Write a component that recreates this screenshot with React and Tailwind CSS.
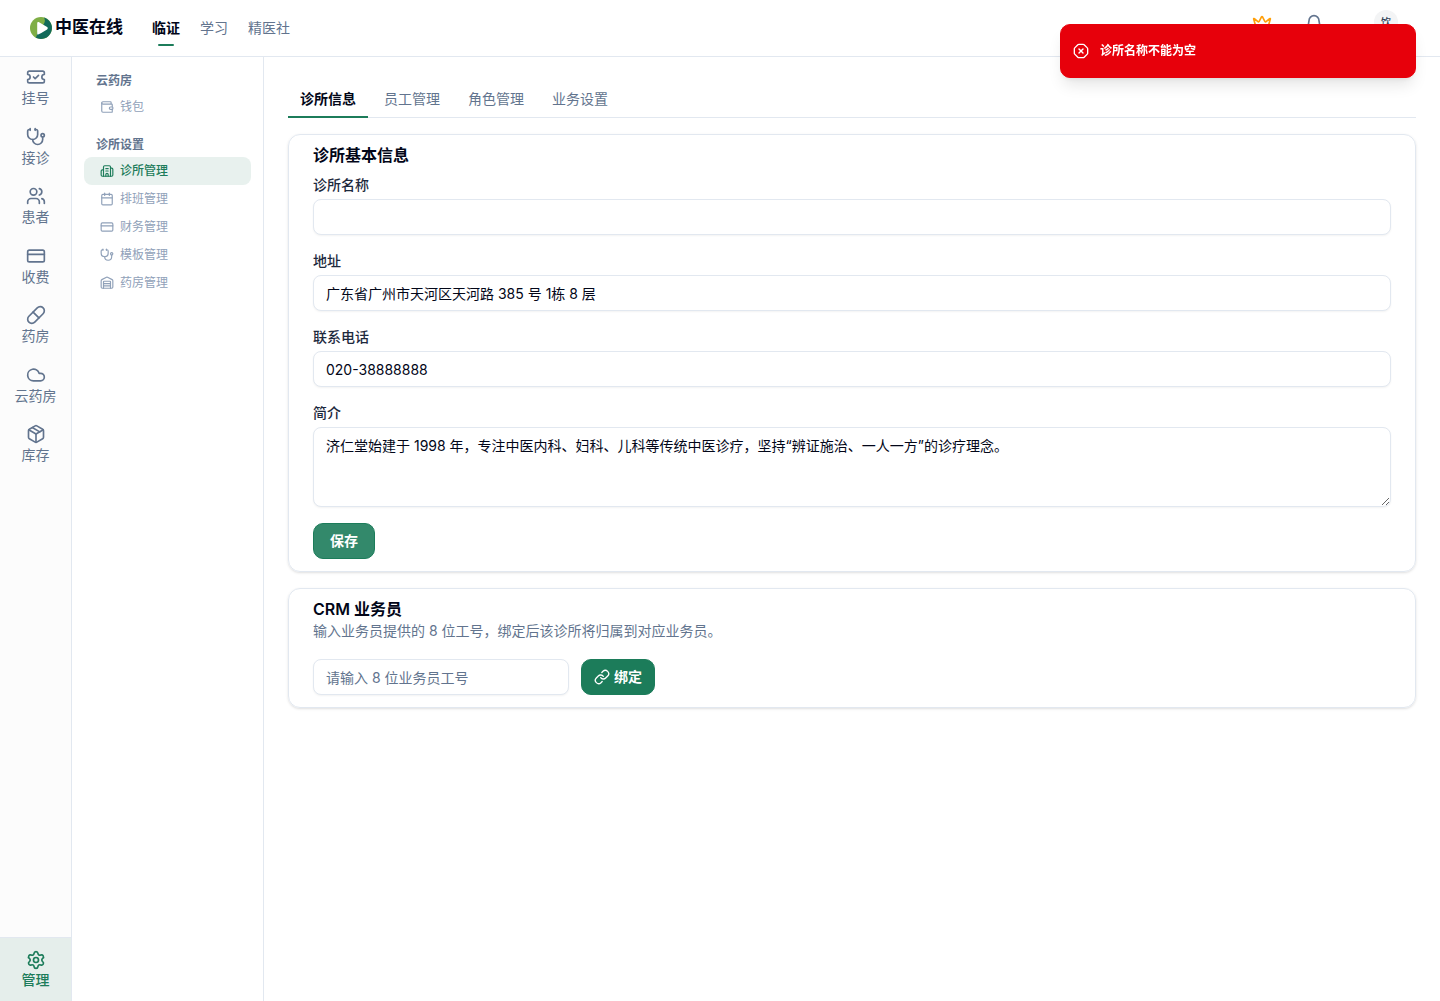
import {
  TicketCheck, Stethoscope, Users, CreditCard, Pill, Cloud, Package, Settings,
  Wallet, Building2, Calendar, Warehouse, Link, OctagonX, Crown, Bell,
} from "lucide-react";

const rail = [
  ["挂号", TicketCheck],
  ["接诊", Stethoscope],
  ["患者", Users],
  ["收费", CreditCard],
  ["药房", Pill],
  ["云药房", Cloud],
  ["库存", Package],
];

const groups = [
  { title: "云药房", items: [["钱包", Wallet]] },
  {
    title: "诊所设置",
    items: [
      ["诊所管理", Building2, true],
      ["排班管理", Calendar],
      ["财务管理", CreditCard],
      ["模板管理", Stethoscope],
      ["药房管理", Warehouse],
    ],
  },
];

const tabs = ["诊所信息", "员工管理", "角色管理", "业务设置"];

const field =
  "w-full rounded-lg border border-slate-200 bg-white px-3 text-sm text-slate-950 shadow-xs outline-none placeholder:text-slate-500";

function Logo() {
  return (
    <svg viewBox="0 0 24 24" className="size-6" aria-hidden="true">
      <circle cx="12" cy="12" r="11" fill="#7fae45" />
      <path d="M15 1.4A11 11 0 1 1 6.6 21.6C8 20 8 18.5 8 17L14 9C16 6.500 16.500 4 15 1.400Z" fill="#126a5a" />
      <path d="M8.200 7.400c0-1.200 1-1.700 1.900-1.200l8 4.900c.9.600.9 1.700 0 2.300l-5.800 3.500c-1.300.8-3 1.400-4.100 1.700Z" fill="#fff" />
    </svg>
  );
}

function Header() {
  return (
    <header className="flex h-14 shrink-0 items-center box-content border-b border-slate-200 pr-[42px] pl-7">
      <a href="#home" className="flex items-center gap-0.5 pl-px text-[17px] font-semibold">
        <Logo />
        中医在线
      </a>
      <nav className="ml-[19px] flex flex-1 text-sm">
        <a href="#clinic" className="relative px-2.5 py-2 font-semibold">
          临证
          <span className="absolute bottom-0 left-1/2 h-0.5 w-4 -translate-x-1/2 rounded-full bg-[#1c7c5a]" />
        </a>
        <a href="#study" className="px-2.5 py-2 text-slate-500">学习</a>
        <a href="#club" className="px-2.5 py-2 text-slate-500">精医社</a>
      </nav>
      <div className="flex items-center pb-2">
        <button type="button" aria-label="会员" className="mr-8 text-[#ff9f0a]"><Crown className="size-5" /></button>
        <button type="button" aria-label="通知" className="mr-[50px] text-slate-500"><Bell className="size-5" /></button>
        <button type="button" className="mb-1 flex size-6 items-center justify-center rounded-full bg-[#f3f4f5] text-[10px] font-medium text-slate-700">饮</button>
      </div>
    </header>
  );
}

function Field({ id, label, value }) {
  return (
    <div className="mb-4">
      <label htmlFor={id} className="mb-1 block text-sm font-medium text-slate-800">{label}</label>
      <input id={id} defaultValue={value} className={`${field} h-9`} />
    </div>
  );
}

export default function App() {
  return (
    <div className="flex min-h-screen flex-col bg-white text-slate-950 font-['Inter','Noto_Sans_CJK_SC',sans-serif]">
      <Header />
      <div className="flex flex-1">
        <nav className="flex w-18 shrink-0 flex-col border-r border-slate-200 bg-[#fcfcfc] text-sm text-slate-500">
          {rail.map(([name, Icon]) => (
            <a key={name} href="#module" className="flex flex-col items-center gap-0.5 py-2.5 leading-tight">
              <Icon className="size-5" />
              {name}
            </a>
          ))}
          <a href="#manage" className="mt-auto flex h-16 flex-col items-center border-t border-slate-200 bg-[#e5eeeb] pt-3 font-medium text-[#1c7c5a]">
            <Settings className="size-5" />
            管理
          </a>
        </nav>
        <aside className="w-48 shrink-0 border-r border-slate-200 px-3 pt-4 text-xs text-slate-400">
          {groups.map((g) => (
            <section key={g.title} className="mb-4">
              <h2 className="px-3 pb-1 font-semibold text-slate-500">{g.title}</h2>
              {g.items.map(([name, Icon, active]) => (
                <a
                  key={name}
                  href="#page"
                  className={active
                    ? "flex h-7 items-center gap-1.5 rounded-lg bg-[#e8f1ee] px-4 font-medium text-[#1c7c5a]"
                    : "flex h-7 items-center gap-1.5 px-4"}
                >
                  <Icon className="size-3.5" />
                  {name}
                </a>
              ))}
            </section>
          ))}
        </aside>
        <main className="min-w-0 flex-1 p-6">
          <div role="tablist" className="flex h-[37px] gap-1 border-b border-slate-200 text-sm">
            {tabs.map((name, i) => (
              <button
                key={name}
                type="button"
                role="tab"
                aria-selected={i === 0}
                className={i === 0
                  ? "-mb-px border-b-2 border-[#1c7c5a] px-3 font-semibold"
                  : "-mb-px border-b-2 border-transparent px-3 text-slate-500"}
              >
                {name}
              </button>
            ))}
          </div>
          <form className="mt-4 rounded-xl border border-slate-200 px-6 py-3 shadow-sm">
            <h2 className="mb-3 text-base leading-4 font-semibold">诊所基本信息</h2>
            <Field id="name" label="诊所名称" value="" />
            <Field id="address" label="地址" value="广东省广州市天河区天河路 385 号 1栋 8 层" />
            <Field id="phone" label="联系电话" value="020-38888888" />
            <label htmlFor="intro" className="mb-1 block text-sm font-medium text-slate-800">简介</label>
            <textarea
              id="intro"
              className={`${field} block h-20 py-2`}
              defaultValue="济仁堂始建于 1998 年，专注中医内科、妇科、儿科等传统中医诊疗，坚持“辨证施治、一人一方”的诊疗理念。"
            />
            <button type="button" className="mt-4 block h-9 rounded-[10px] border border-[#1c7c5a] bg-[#33896b] px-4 text-sm font-semibold text-white">保存</button>
          </form>
          <form className="mt-4 rounded-xl border border-slate-200 px-6 py-3 shadow-sm">
            <h2 className="text-base leading-4 font-semibold">CRM 业务员</h2>
            <p className="mt-1 text-sm text-slate-500">输入业务员提供的 8 位工号，绑定后该诊所将归属到对应业务员。</p>
            <div className="mt-[18px] flex gap-3">
              <div className="w-64">
                <input aria-label="业务员工号" placeholder="请输入 8 位业务员工号" className={`${field} h-9`} />
              </div>
              <button type="button" className="flex h-9 items-center gap-1 rounded-[10px] border border-[#1c7c5a] bg-[#1c7c5a] px-3 text-sm font-semibold text-white">
                <Link className="size-4" />
                绑定
              </button>
            </div>
          </form>
        </main>
      </div>
      <div role="alert" className="fixed top-6 right-6 flex w-89 items-center gap-[11px] rounded-[10px] border border-[#e7000b] bg-[#e7000b] px-3 py-4.5 text-xs font-semibold text-white shadow-lg">
        <OctagonX className="size-4" />
        诊所名称不能为空
      </div>
    </div>
  );
}
